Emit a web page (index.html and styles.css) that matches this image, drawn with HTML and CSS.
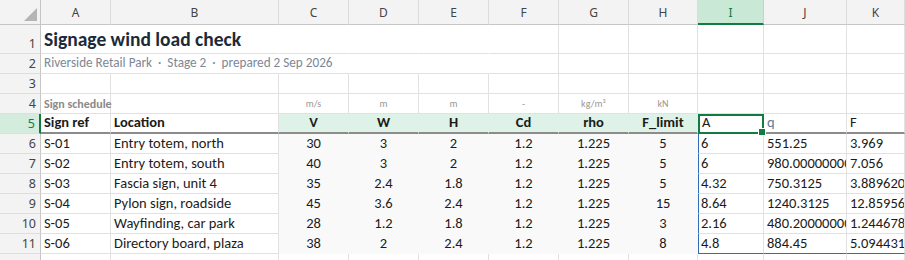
FILE: index.html
```html
<!DOCTYPE html>
<html lang="en">
    <head>
        <meta charset="UTF-8"/>
        <title>Signage wind load check</title>
        <link rel="stylesheet" href="styles.css">
    </head>
    <body>
        <div class="sheet">
            <!-- column headers -->
            <div class="corner"></div>
            <div class="ch">A</div><div class="ch">B</div><div class="ch">C</div><div class="ch">D</div>
            <div class="ch">E</div><div class="ch">F</div><div class="ch">G</div><div class="ch">H</div>
            <div class="ch sel">I</div><div class="ch">J</div><div class="ch">K</div>

            <!-- 1 : title spills over to F -->
            <div class="rh">1</div>
            <div class="cell ov title">Signage wind load check</div><div class="cell ov"></div><div class="cell ov"></div><div class="cell ov"></div>
            <div class="cell ov"></div><div class="cell"></div><div class="cell"></div><div class="cell"></div>
            <div class="cell"></div><div class="cell"></div><div class="cell"></div>

            <!-- 2 -->
            <div class="rh">2</div>
            <div class="cell ov sub">Riverside Retail Park &nbsp;·&nbsp; Stage 2 &nbsp;·&nbsp; prepared 2 Sep 2026</div><div class="cell ov"></div><div class="cell ov"></div><div class="cell ov"></div>
            <div class="cell ov"></div><div class="cell"></div><div class="cell"></div><div class="cell"></div>
            <div class="cell"></div><div class="cell"></div><div class="cell"></div>

            <!-- 3 -->
            <div class="rh">3</div>
            <div class="cell"></div><div class="cell"></div><div class="cell"></div><div class="cell"></div>
            <div class="cell"></div><div class="cell"></div><div class="cell"></div><div class="cell"></div>
            <div class="cell"></div><div class="cell"></div><div class="cell"></div>

            <!-- 4 -->
            <div class="rh">4</div>
            <div class="cell note">Sign schedule</div><div class="cell"></div>
            <div class="cell unit">m/s</div><div class="cell unit">m</div><div class="cell unit">m</div>
            <div class="cell unit">-</div><div class="cell unit">kg/m³</div><div class="cell unit">kN</div>
            <div class="cell"></div><div class="cell"></div><div class="cell"></div>

            <!-- 5 -->
            <div class="rh rsel">5</div>
            <div class="cell head">Sign ref</div><div class="cell head">Location</div>
            <div class="cell head fill c">V</div><div class="cell head fill c">W</div><div class="cell head fill c">H</div>
            <div class="cell head fill c">Cd</div><div class="cell head fill c">rho</div><div class="cell head fill c">F_limit</div>
            <div class="cell head plain active">A</div><div class="cell head plain q">q</div><div class="cell head plain">F</div>

            <!-- 6 -->
            <div class="rh">6</div>
            <div class="cell">S-01</div><div class="cell">Entry totem, north</div>
            <div class="cell d">30</div><div class="cell d">3</div><div class="cell d">2</div>
            <div class="cell d">1.2</div><div class="cell d">1.225</div><div class="cell d">5</div>
            <div class="cell bl">6</div><div class="cell">551.25</div><div class="cell">3.969</div>

            <!-- 7 -->
            <div class="rh">7</div>
            <div class="cell">S-02</div><div class="cell">Entry totem, south</div>
            <div class="cell d">40</div><div class="cell d">3</div><div class="cell d">2</div>
            <div class="cell d">1.2</div><div class="cell d">1.225</div><div class="cell d">5</div>
            <div class="cell bl">6</div><div class="cell">980.0000000000001</div><div class="cell">7.056</div>

            <!-- 8 -->
            <div class="rh">8</div>
            <div class="cell">S-03</div><div class="cell">Fascia sign, unit 4</div>
            <div class="cell d">35</div><div class="cell d">2.4</div><div class="cell d">1.8</div>
            <div class="cell d">1.2</div><div class="cell d">1.225</div><div class="cell d">5</div>
            <div class="cell bl">4.32</div><div class="cell">750.3125</div><div class="cell">3.8896200000000003</div>

            <!-- 9 -->
            <div class="rh">9</div>
            <div class="cell">S-04</div><div class="cell">Pylon sign, roadside</div>
            <div class="cell d">45</div><div class="cell d">3.6</div><div class="cell d">2.4</div>
            <div class="cell d">1.2</div><div class="cell d">1.225</div><div class="cell d">15</div>
            <div class="cell bl">8.64</div><div class="cell">1240.3125</div><div class="cell">12.859560000000002</div>

            <!-- 10 -->
            <div class="rh">10</div>
            <div class="cell">S-05</div><div class="cell">Wayfinding, car park</div>
            <div class="cell d">28</div><div class="cell d">1.2</div><div class="cell d">1.8</div>
            <div class="cell d">1.2</div><div class="cell d">1.225</div><div class="cell d">3</div>
            <div class="cell bl">2.16</div><div class="cell">480.20000000000005</div><div class="cell">1.2446784</div>

            <!-- 11 -->
            <div class="rh">11</div>
            <div class="cell">S-06</div><div class="cell">Directory board, plaza</div>
            <div class="cell d">38</div><div class="cell d">2</div><div class="cell d">2.4</div>
            <div class="cell d">1.2</div><div class="cell d">1.225</div><div class="cell d">8</div>
            <div class="cell bl bb">4.8</div><div class="cell bb">884.45</div><div class="cell bb">5.094431999999999</div>

            <!-- 12, only its top edge is in view -->
            <div class="rh"></div>
            <div class="cell"></div><div class="cell"></div><div class="cell"></div><div class="cell"></div>
            <div class="cell"></div><div class="cell"></div><div class="cell"></div><div class="cell"></div>
            <div class="cell"></div><div class="cell"></div><div class="cell"></div>
        </div>
    </body>
</html>
```
FILE: styles.css
```css
*{margin: 0px; padding: 0px; box-sizing: border-box}
body{background: #fff; overflow: hidden; font-family: Carlito, Calibri, Lato, "Noto Sans", sans-serif; color: #1b1b1b}

.sheet{display: grid; width: 905px;
    grid-template-columns: 41px 70px 168px 70px 70px 70px 70px 70px 69px 66px 83px 58px;
    grid-template-rows: 25px 29px repeat(11, 20px);}

.corner{background: #f3f3f3; border-right: 1px solid #c6c6c6; border-bottom: 1px solid #c6c6c6; position: relative}
.corner::after{content: ""; position: absolute; right: 3px; bottom: 3px; border-left: 13px solid transparent; border-bottom: 13px solid #b5b5b5}

.ch{background: #f3f3f3; border-bottom: 1px solid #c6c6c6; border-right: 1px solid #dcdcdc; font-family: "Noto Sans", sans-serif; font-size: 12px; color: #444; display: flex; align-items: center; justify-content: center; padding-top: 1px}
.ch.sel{background: #c9e9d6; color: #107c41; border-bottom: 2px solid #107c41; border-right-color: #b5dcc5}

.rh{background: #f3f3f3; border-right: 1px solid #c6c6c6; border-bottom: 1px solid #dedede; font-family: "Noto Sans", sans-serif; font-size: 12.5px; color: #444; display: flex; align-items: flex-end; justify-content: flex-end; padding: 0 4px 1px 0}
.rh.rsel{background: #d3ecdd; color: #107c41; border-right: 2px solid #107c41}

.cell{border-right: 1px solid #e1e1e1; border-bottom: 1px solid #e1e1e1; font-size: 14.5px; white-space: nowrap; overflow: hidden; display: flex; align-items: flex-end; padding: 0 3px 1px 3px}
.c{justify-content: center}
/* text spills into the next empty cells, so no grid line between them */
.ov{border-right-color: transparent}

.title{overflow: visible; font-size: 19.5px; font-weight: bold; color: #1c2a3a; padding-bottom: 2px}
.sub{overflow: visible; font-size: 13.2px; color: #7c8896; padding-bottom: 2px}
.note{overflow: visible; font-size: 12px; font-weight: bold; color: #8a8a8a; padding-bottom: 2px}
.unit{justify-content: center; font-size: 10px; color: #999; padding-bottom: 3px}

.head{font-weight: bold; border-bottom: 2px solid #8c8c8c}
.head.fill{background: #def2e7; border-right-color: #def2e7}
.head.plain{font-weight: normal}
.q{color: #5d7b99}
.active{position: relative; overflow: visible; z-index: 2; border: 2px solid #107c41; padding-left: 2px}
.active::after{content: ""; position: absolute; right: -4px; bottom: -4px; width: 6px; height: 6px; background: #107c41; border: 1px solid #fff}

.d{background: #f9f9f9; border-color: #f9f9f9; justify-content: center}
.bl{border-left: 1px solid #2f6db5; padding-left: 2px}
.bb{border-bottom: 1px solid #2f6db5}
```
